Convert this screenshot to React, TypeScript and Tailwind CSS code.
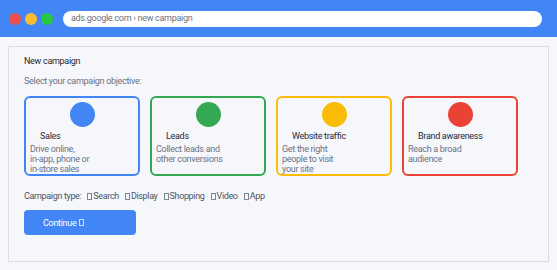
import React from 'react';

const objectives = [
  { title: 'Sales', desc: ['Drive online,', 'in-app, phone or', 'in-store sales'], border: 'border-[#4285f4]', dot: 'bg-[#4285f4]' },
  { title: 'Leads', desc: ['Collect leads and', 'other conversions'], border: 'border-[#34a853]', dot: 'bg-[#34a853]' },
  { title: 'Website traffic', desc: ['Get the right', 'people to visit', 'your site'], border: 'border-[#fbbc05]', dot: 'bg-[#fbbc05]' },
  { title: 'Brand awareness', desc: ['Reach a broad', 'audience'], border: 'border-[#ea4335]', dot: 'bg-[#ea4335]' },
];

const types = ['Search', 'Display', 'Shopping', 'Video', 'App'];

function Tofu() {
  return <span className="inline-block shrink-0 w-[5px] h-[7px] border border-current opacity-70" />;
}

export default function App() {
  return (
    <div className="w-[557px] h-[270px] bg-[#f6f7fb] flex flex-col" style={{ fontFamily: 'Roboto, "Liberation Sans", sans-serif' }}>
      {/* browser chrome */}
      <div className="h-[37px] bg-[#4285f4] flex items-center pl-[9px] pr-[15px]">
        <div className="flex gap-[4px]">
          <span className="w-3 h-3 rounded-full bg-[#f0504d]" />
          <span className="w-3 h-3 rounded-full bg-[#fbbc2e]" />
          <span className="w-3 h-3 rounded-full bg-[#28c840]" />
        </div>
        <div className="ml-[10px] flex-1 h-4 bg-white rounded-full flex items-center px-2 text-[9px] text-gray-500 tracking-[-0.3px]">
          ads.google.com › new campaign
        </div>
      </div>

      <div className="flex-1 px-2 pt-[9px] pb-2">
        <div className="h-full border border-[#dcdde2] pl-[15px] pt-2 text-[9px] leading-[12px] tracking-[-0.3px]">
          <div className="text-gray-800">New campaign</div>
          <div className="mt-2 text-gray-500">Select your campaign objective:</div>

          <div className="mt-[9px] flex gap-[10px]">
            {objectives.map((o) => (
              <div key={o.title} className={`w-[116px] h-[80px] border-2 ${o.border} rounded-md overflow-hidden px-1 pt-1`}>
                <div className={`mx-auto w-[25px] h-[25px] rounded-full ${o.dot}`} />
                <div className="mt-[3px] pl-[10px] text-gray-800">{o.title}</div>
                <div className="mt-[2px] text-gray-500 leading-[10px]">
                  {o.desc.map((d) => (
                    <div key={d}>{d}</div>
                  ))}
                </div>
              </div>
            ))}
          </div>

          <div className="mt-[14px] text-gray-600 flex items-center gap-[6px] tracking-[-0.35px]">
            <span>Campaign type:</span>
            {types.map((t) => (
              <span key={t} className="flex items-center gap-[1px]">
                <Tofu />
                {t}
              </span>
            ))}
          </div>

          <button className="mt-2 w-[112px] h-[25px] bg-[#4285f4] rounded text-white text-[9px] flex items-center gap-[3px] pl-[19px]">
            Continue
            <Tofu />
          </button>
        </div>
      </div>
    </div>
  );
}
